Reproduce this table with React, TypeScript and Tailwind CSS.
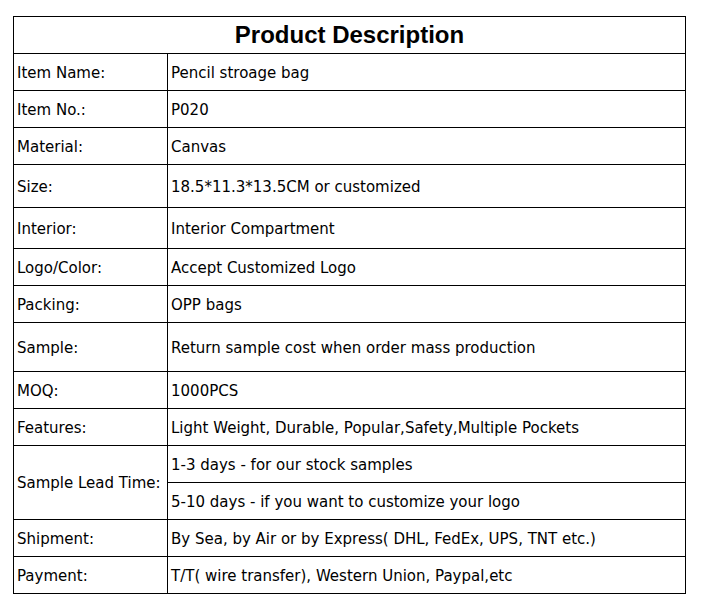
const rows: { label: string; values: string[]; h: string }[] = [
  { label: 'Item Name:', values: ['Pencil stroage bag'], h: 'h-[37px]' },
  { label: 'Item No.:', values: ['P020'], h: 'h-[37px]' },
  { label: 'Material:', values: ['Canvas'], h: 'h-[37px]' },
  { label: 'Size:', values: ['18.5*11.3*13.5CM or customized'], h: 'h-[43px]' },
  { label: 'Interior:', values: ['Interior Compartment'], h: 'h-[41px]' },
  { label: 'Logo/Color:', values: ['Accept Customized Logo'], h: 'h-[37px]' },
  { label: 'Packing:', values: ['OPP bags'], h: 'h-[37px]' },
  { label: 'Sample:', values: ['Return sample cost when order mass production'], h: 'h-[49px]' },
  { label: 'MOQ:', values: ['1000PCS'], h: 'h-[37px]' },
  { label: 'Features:', values: ['Light Weight, Durable, Popular,Safety,Multiple Pockets'], h: 'h-[37px]' },
  {
    label: 'Sample Lead Time:',
    values: ['1-3 days - for our stock samples', '5-10 days - if you want to customize your logo'],
    h: 'h-[74px]',
  },
  { label: 'Shipment:', values: ['By Sea, by Air or by Express( DHL, FedEx, UPS, TNT etc.)'], h: 'h-[37px]' },
  { label: 'Payment:', values: ['T/T( wire transfer), Western Union, Paypal,etc'], h: 'h-[37px]' },
];

export default function App() {
  return (
    <div className="min-h-screen bg-white pt-[16px] pl-[13px]">
      <div className="w-[673px] border-l border-r border-t border-black text-[15px] text-black [font-family:'DejaVu_Sans',Verdana,sans-serif]">
        <div className="h-[37px] border-b border-black flex items-center justify-center">
          <h1 className="text-[24px] font-bold leading-none [font-family:'Liberation_Sans',Arial,sans-serif]">
            Product Description
          </h1>
        </div>

        {rows.map(row => (
          <div key={row.label} className={`flex ${row.h}`}>
            <div className="w-[154px] shrink-0 border-r border-b border-black flex items-center pl-[3px] pt-[2px]">
              {row.label}
            </div>
            <div className="flex-1 flex flex-col">
              {row.values.map(v => (
                <div key={v} className="flex-1 border-b border-black flex items-center pl-[3px] pt-[2px]">
                  {v}
                </div>
              ))}
            </div>
          </div>
        ))}
      </div>
    </div>
  );
}
